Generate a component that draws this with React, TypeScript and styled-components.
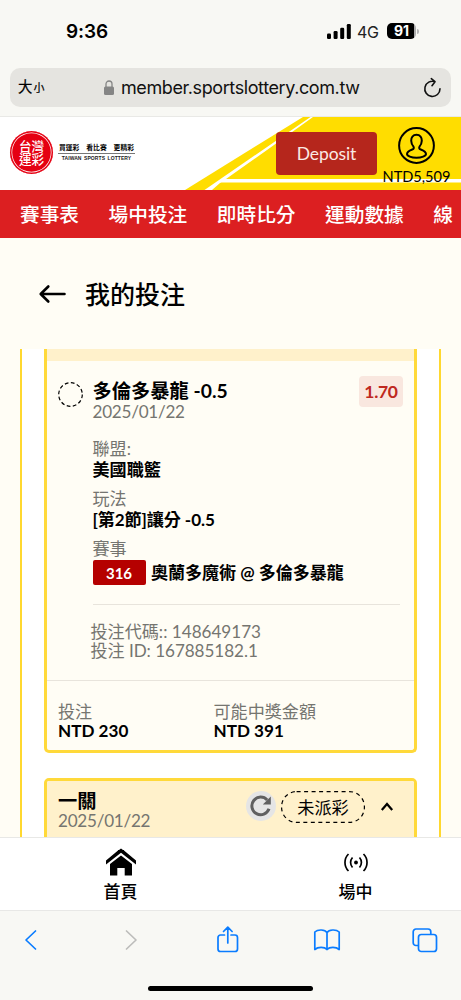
import React from 'react';
import styled, { createGlobalStyle } from 'styled-components';

const Global = createGlobalStyle`
  * { box-sizing: border-box; }
  body { margin: 0; background: #fffdf5; font-family: Lato, "Noto Sans CJK TC", sans-serif; color: #000; }
  svg { display: block; flex: none; overflow: visible; }
`;

const Phone = styled.div`
  width: 461px;
  height: 1000px;
  display: flex;
  flex-direction: column;
  overflow: hidden;
`;

const BrowserTop = styled.div`
  height: 117px;
  flex: none;
  background: #f8f8f4;
  border-bottom: 1px solid #e9e9e6;
  font-family: Inter, "Noto Sans CJK TC", sans-serif;
`;

const StatusBar = styled.div`
  height: 68px;
  padding: 0 42px 6px 66px;
  display: flex;
  align-items: center;
`;

const Clock = styled.span`
  flex: 1;
  margin-top: 2px;
  font-size: 19px;
  font-weight: 600;
  line-height: 24px;
  letter-spacing: -0.1px;
`;

const Network = styled.span`
  width: 23px;
  margin: 2px 7px 0 6px;
  font-size: 16px;
  line-height: 20px;
  letter-spacing: -0.3px;
  color: #222;
`;

const Battery = styled.span`
  width: 29px;
  height: 16px;
  border-radius: 5px;
  background: linear-gradient(90deg, #000 27px, #aaa 27px);
  color: #fff;
  font-size: 14px;
  font-weight: 700;
  line-height: 16px;
  text-align: center;
`;

const BatteryTip = styled.span`
  width: 2px;
  height: 5px;
  margin-left: 1px;
  border-radius: 0 2px 2px 0;
  background: #b5b5b5;
`;

const AddressBar = styled.div`
  height: 39px;
  margin: 0 10px;
  padding: 0 10px 0 8px;
  display: flex;
  align-items: center;
  border-radius: 10px;
  background: #e5e4e0;
`;

const TextSize = styled.span`
  width: 86px;
  font-size: 14.5px;
  font-weight: 400;
  line-height: 20px;
  -webkit-text-stroke: 0.2px #000;
  small { font-size: 11px; margin-left: 1px; }
`;

const Url = styled.span`
  flex: 1;
  margin-left: 7px;
  font-size: 18px;
  line-height: 24px;
  letter-spacing: -0.4px;
  white-space: nowrap;
  color: #111;
`;

const SiteHeader = styled.header`
  position: relative;
  height: 73px;
  flex: none;
  display: flex;
  background: #fff;
`;

const HeaderStripes = styled.svg`
  position: absolute;
  inset: 0;
`;

const Brand = styled.div`
  position: relative;
  flex: 1;
  display: flex;
  padding: 14px 0 0 10px;
`;

const Seal = styled.div`
  width: 43px;
  height: 43px;
  display: flex;
  flex-direction: column;
  align-items: center;
  justify-content: center;
  border-radius: 50%;
  background: #e50012;
  box-shadow: inset 0 0 0 1.5px #e50012, inset 0 0 0 2.2px #fff;
  color: #fff;
  font-size: 12.6px;
  font-weight: 500;
  line-height: 13px;
`;

const Slogan = styled.div`
  width: 77px;
  margin: 13px 0 0 5px;
  text-align: center;
  white-space: nowrap;
`;

const SloganZh = styled.div`
  display: flex;
  justify-content: space-between;
  padding: 0 1px;
  height: 10px;
  border-bottom: 1px solid #777;
  font-size: 6.8px;
  font-weight: 700;
  line-height: 7px;
`;

const SloganEn = styled.div`
  font: 700 5px/9px "Liberation Sans", sans-serif;
  letter-spacing: 0.08px;
  word-spacing: 1px;
  color: #222;
`;

const Deposit = styled.button`
  position: relative;
  width: 101px;
  height: 43px;
  margin: 15px 5px 0 0;
  padding: 1px 0 0;
  border: 0;
  border-radius: 4px;
  background: #b5261c;
  color: #fbe9e4;
  font: 17.5px/24px Lato, sans-serif;
  letter-spacing: -0.1px;
`;

const Account = styled.div`
  position: relative;
  width: 69px;
  margin-right: 10px;
  padding-top: 10px;
  display: flex;
  flex-direction: column;
  align-items: center;
`;

const Balance = styled.span`
  margin-top: 4px;
  font-size: 14.6px;
  line-height: 18px;
`;

const Tabs = styled.nav`
  height: 48px;
  flex: none;
  display: flex;
  gap: 29.5px;
  padding-left: 20px;
  overflow: hidden;
  background: #dc1f21;
  color: #fff;
  font-size: 19.7px;
  font-weight: 500;
  line-height: 49px;
  white-space: nowrap;
`;

const PageTitle = styled.div`
  height: 111px;
  flex: none;
  display: flex;
  align-items: center;
  gap: 19px;
  padding-left: 39px;
  font-size: 25px;
  font-weight: 500;
  line-height: 36px;
`;

const Panel = styled.main`
  flex: 1;
  min-height: 0;
  margin: 0 20px;
  padding: 0 22px;
  overflow: hidden;
  border: solid #ffd82f;
  border-width: 0 2px;
  background: #fff;
`;

const Card = styled.section<{ $continued?: boolean }>`
  margin-bottom: 25px;
  border: 3px solid #ffd93a;
  border-top-width: ${p => (p.$continued ? 0 : '3px')};
  border-radius: ${p => (p.$continued ? '0 0 5px 5px' : '5px 5px 0 0')};
  background: #fffdf5;
  overflow: hidden;
`;

const CardStrip = styled.div`
  height: 12px;
  background: #fff1cb;
`;

const Bet = styled.div`
  height: 319px;
  padding: 20px 11px 0 11px;
  display: grid;
  grid-template-columns: 25px 1fr;
  column-gap: 9.5px;
  align-items: start;
`;

const PendingMark = styled.svg`
  margin: 1px 0 0 -0.5px;
`;

const Line = styled.div<{ $tone?: 'muted' | 'strong'; $size?: number; $gap?: number; $tight?: number }>`
  margin-top: ${p => p.$gap ?? 0}px;
  font-size: ${p => p.$size ?? 17.1}px;
  line-height: 20px;
  letter-spacing: ${p => -(p.$tight ?? 0)}px;
  font-weight: ${p => (p.$tone === 'muted' ? 400 : 700)};
  color: ${p => (p.$tone === 'muted' ? '#757570' : '#000')};
  white-space: nowrap;
`;

const BetHead = styled.div`
  display: flex;
  justify-content: space-between;
`;

const Odds = styled.div`
  width: 44px;
  height: 31px;
  margin-top: -5px;
  border-radius: 4px;
  background: #f9e7df;
  color: #bf281e;
  font-size: 17.5px;
  font-weight: 700;
  line-height: 32px;
  letter-spacing: -0.3px;
  text-align: center;
`;

const Match = styled.div`
  display: flex;
  align-items: center;
  gap: 5.5px;
  padding-top: 1px;
`;

const MatchNo = styled.span`
  width: 53px;
  height: 25px;
  border-radius: 2px;
  background: #b50000;
  color: #fff;
  font-size: 15px;
  font-weight: 700;
  line-height: 26px;
  text-align: center;
`;

const Rule = styled.div`
  height: 1px;
  margin: 19px 3px 17px 0;
  background: #e8e4dc;
`;

const Codes = styled.div`
  margin-left: -2px;
`;

const Stakes = styled.div`
  height: 70px;
  display: grid;
  grid-template-columns: 155.5px 1fr;
  padding: 21px 0 0 11px;
  border-top: 1px solid #e8e4dc;
`;

const CardHead = styled.div`
  height: 70px;
  display: flex;
  align-items: flex-start;
  padding: 10px 21px 0 11px;
  background: #fff1cb;
`;

const CardName = styled.div`
  flex: 1;
`;

const Refresh = styled.div`
  width: 30px;
  height: 30px;
  border-radius: 50%;
  background: #e5e5e5;
`;

const StatusPill = styled.div`
  position: relative;
  width: 84px;
  height: 32px;
  margin: 0 16px 0 5px;
  font-size: 17.2px;
  line-height: 33px;
  text-align: center;
  svg { position: absolute; inset: 0; }
`;

const Chevron = styled.svg`
  margin-top: 11px;
`;

const BottomNav = styled.nav`
  height: 74px;
  flex: none;
  display: grid;
  grid-template-columns: 241px 1fr;
  border: solid #e8e8e6;
  border-width: 1px 0;
  background: #fff;
`;

const NavItem = styled.a<{ $shift?: number }>`
  display: flex;
  flex-direction: column;
  align-items: center;
  padding: 10px 0 0 ${p => p.$shift ?? 0}px;
  font-size: 17px;
  font-weight: 500;
  line-height: 20px;
  svg { margin-bottom: 6px; }
`;

const BrowserBottom = styled.div`
  height: 89px;
  flex: none;
  display: flex;
  flex-direction: column;
  justify-content: space-between;
  align-items: center;
  padding: 14px 0 9px;
  background: #f8f8f4;
`;

const Tools = styled.div`
  width: 461px;
  display: flex;
  justify-content: space-between;
  padding: 0 23px 0 18px;
  svg { fill: none; stroke: #0a7cff; stroke-width: 1.7; stroke-linecap: round; stroke-linejoin: round; }
`;

const ForwardIcon = styled.svg`
  && { stroke: #bdbdbb; }
`;

const HomeBar = styled.div`
  width: 165px;
  height: 5px;
  border-radius: 3px;
  background: #000;
`;

const tabs = ['賽事表', '場中投注', '即時比分', '運動數據', '線'];

export default function App() {
  return (
    <Phone>
      <Global />
      <BrowserTop>
        <StatusBar>
          <Clock>9:36</Clock>
          <svg width="24" height="15" viewBox="0 0 24 15">
            <rect x="0" y="9.5" width="4" height="5.5" rx="1.2" />
            <rect x="6.6" y="7" width="4" height="8" rx="1.2" />
            <rect x="13.2" y="3.7" width="4" height="11.3" rx="1.2" />
            <rect x="19.8" y="0" width="4" height="15" rx="1.2" />
          </svg>
          <Network>4G</Network>
          <Battery>91</Battery>
          <BatteryTip />
        </StatusBar>
        <AddressBar>
          <TextSize>大<small>小</small></TextSize>
          <svg width="10" height="15" viewBox="0 0 10 15">
            <rect y="6.500" width="10" height="8.500" rx="1.500" fill="#858585" />
            <path d="M2 7V4a3 3 0 0 1 6 0v3" fill="none" stroke="#858585" strokeWidth="1.300" />
          </svg>
          <Url>member.sportslottery.com.tw</Url>
          <svg width="17" height="20" viewBox="0 0 17 20" fill="none" stroke="#111" strokeWidth="1.600" strokeLinecap="round" strokeLinejoin="round">
            <path d="M11 3.700A7.600 7.600 0 1 0 16 10.800M7.300.7 11 3.700 8 7.700" />
          </svg>
        </AddressBar>
      </BrowserTop>

      <SiteHeader>
        <HeaderStripes width="461" height="73" viewBox="0 0 461 73">
          <path d="M303 0H461V73H185Z" fill="#ffdd00" />
          <path d="M310.500 0 204.500 73H212L220 66 226 62 267 33 313 0Z" fill="#fff" />
          <path d="M224 62H461V65.500H218Z" fill="#fff" />
        </HeaderStripes>
        <Brand>
          <Seal><span>台灣</span><span>運彩</span></Seal>
          <Slogan>
            <SloganZh><span>買運彩</span><span>看比賽</span><span>更精彩</span></SloganZh>
            <SloganEn>TAIWAN SPORTS LOTTERY</SloganEn>
          </Slogan>
        </Brand>
        <Deposit>Deposit</Deposit>
        <Account>
          <svg width="37" height="37" viewBox="0 0 37 37" fill="none" stroke="#000" strokeWidth="2">
            <circle cx="18.500" cy="18.500" r="17.400" />
            <path d="M18.500 7.800c-3.600 0-5.500 2.600-5.300 6 .1 2.700 1 4.400 2.300 5.900.7 1.200.2 2.100-1 2.700-3.200 1.200-5.500 2-5.500 4.600 0 2 4.300 3.800 9.500 3.800s9.500-1.800 9.500-3.800c0-2.600-2.300-3.400-5.500-4.600-1.200-.6-1.700-1.500-1-2.700 1.300-1.500 2.200-3.200 2.300-5.900.2-3.400-1.700-6-5.300-6Z" />
          </svg>
          <Balance>NTD5,509</Balance>
        </Account>
      </SiteHeader>

      <Tabs>{tabs.map(t => <span key={t}>{t}</span>)}</Tabs>

      <PageTitle>
        <svg width="27" height="18" viewBox="0 0 27 18" fill="none" stroke="#000" strokeWidth="2.600" strokeLinecap="round" strokeLinejoin="round">
          <path d="M25.500 9H2M9.300 1.500 1.700 9l7.600 7.500" />
        </svg>
        <span>我的投注</span>
      </PageTitle>

      <Panel>
        <Card $continued>
          <CardStrip />
          <Bet>
            <PendingMark width="25" height="25" viewBox="0 0 25 25">
              <circle cx="12.500" cy="12.500" r="11.800" fill="none" stroke="#000" strokeWidth="1.200" strokeDasharray="3.700 2.480" />
            </PendingMark>
            <div>
              <BetHead>
                <div>
                  <Line $size={19.3}>多倫多暴龍 -0.5</Line>
                  <Line $tone="muted" $gap={1} $tight={0.25}>2025/01/22</Line>
                </div>
                <Odds>1.70</Odds>
              </BetHead>
              <Line $tone="muted" $gap={17}>聯盟:</Line>
              <Line $gap={1}>美國職籃</Line>
              <Line $tone="muted" $gap={9}>玩法</Line>
              <Line $gap={1} $tight={0.1}>[第2節]讓分 -0.5</Line>
              <Line $tone="muted" $gap={9}>賽事</Line>
              <Match>
                <MatchNo>316</MatchNo>
                <Line $gap={1} $tight={0.07}>奧蘭多魔術 @ 多倫多暴龍</Line>
              </Match>
              <Rule />
              <Codes>
                <Line $tone="muted">投注代碼:: 148649173</Line>
                <Line $tone="muted" $gap={-1} $tight={0.05}>投注 ID: 167885182.1</Line>
              </Codes>
            </div>
          </Bet>
          <Stakes>
            <div>
              <Line $tone="muted">投注</Line>
              <Line $gap={-1}>NTD 230</Line>
            </div>
            <div>
              <Line $tone="muted">可能中獎金額</Line>
              <Line $gap={-1}>NTD 391</Line>
            </div>
          </Stakes>
        </Card>
        <Card>
          <CardHead>
            <CardName>
              <Line $size={19.3}>一關</Line>
              <Line $tone="muted" $tight={0.25}>2025/01/22</Line>
            </CardName>
            <Refresh>
              <svg width="30" height="30" viewBox="0 0 30 30">
                <path d="M23 17.800A8.800 8.800 0 1 1 21.200 9" fill="none" stroke="#606060" strokeWidth="3" />
                <path d="M24.800 5.500V13.500H16.800Z" fill="#606060" />
              </svg>
            </Refresh>
            <StatusPill>
              <svg width="84" height="32" viewBox="0 0 84 32">
                <rect x=".6" y=".6" width="82.800" height="30.800" rx="15" fill="none" stroke="#000" strokeWidth="1.200" strokeDasharray="4 3.500" />
              </svg>
              未派彩
            </StatusPill>
            <Chevron width="12" height="9" viewBox="0 0 12 9" fill="none" stroke="#000" strokeWidth="2.200">
              <path d="M.8 8 6 2l5.200 6" />
            </Chevron>
          </CardHead>
        </Card>
      </Panel>

      <BottomNav>
        <NavItem>
          <svg width="30" height="28" viewBox="0 0 30 28">
            <path d="M0 12.500 12 2.500V2H13L15 .5 17 2H18V2.500L30 12.500V16.500L15 4.800 0 16.500Z" />
            <path d="M4 16 15 7.500 26 16V27.500H18.700V20H11.300V27.500H4Z" />
          </svg>
          首頁
        </NavItem>
        <NavItem $shift={9}>
          <svg width="24" height="28" viewBox="0 0 24 28" fill="none" stroke="#000" strokeWidth="1.700">
            <circle cx="12" cy="14.500" r="1.900" fill="#000" stroke="none" />
            <path d="M8.500 9.500a7.500 7.500 0 0 0 0 10M15.500 9.500a7.500 7.500 0 0 1 0 10M4.500 6a12 12 0 0 0 0 17M19.500 6a12 12 0 0 1 0 17" />
          </svg>
          場中
        </NavItem>
      </BottomNav>

      <BrowserBottom>
        <Tools>
          <svg width="26" height="30" viewBox="0 0 26 30"><path d="M17.500 6 8 15l9.500 9" /></svg>
          <ForwardIcon width="26" height="30" viewBox="0 0 26 30"><path d="M9.500 6 19 15l-9.500 9" /></ForwardIcon>
          <svg width="26" height="30" viewBox="0 0 26 30"><path d="M9.500 10H5.500a2.500 2.500 0 0 0-2.500 2.500v11.500a2.500 2.500 0 0 0 2.500 2.500h14.500a2.500 2.500 0 0 0 2.500-2.500V12.500a2.500 2.500 0 0 0-2.500-2.500H16M12.800 18V2.500M8.500 6.500l4.300-4.300 4.300 4.300" /></svg>
          <svg width="26" height="30" viewBox="0 0 26 30"><path d="M13 7.500C11 4.500 4 4 .8 7v17.500c3.200-2.800 9.700-2.700 12.200 0 2.500-2.700 9-2.800 12.200 0V7C22 4 15 4.500 13 7.500ZM13 7.500v17" /></svg>
          <svg width="26" height="30" viewBox="0 0 26 30"><path d="M6 20.500H4A2.800 2.800 0 0 1 1.200 17.700V6.800A2.800 2.800 0 0 1 4 4h12a2.800 2.800 0 0 1 2.800 2.800V9" /><rect x="6.500" y="9.500" width="18" height="17" rx="2.800" /></svg>
        </Tools>
        <HomeBar />
      </BrowserBottom>
    </Phone>
  );
}
